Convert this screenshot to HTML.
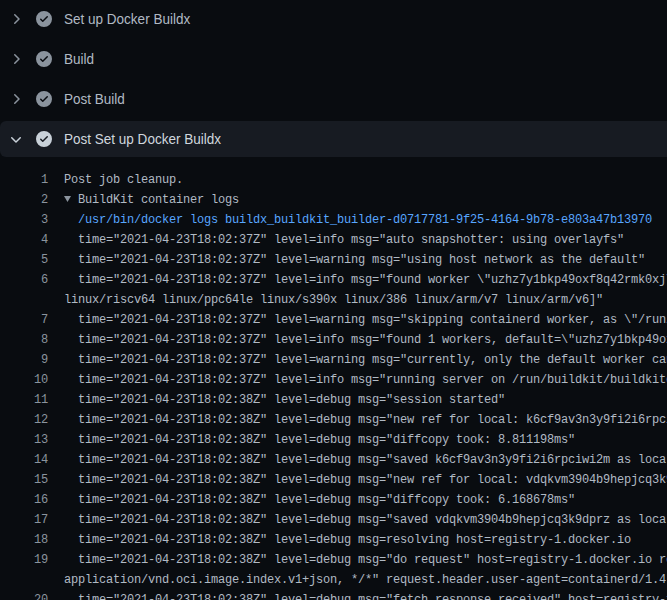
<!DOCTYPE html>
<html><head><meta charset="utf-8">
<style>
html,body{margin:0;padding:0;background:#090c10;width:667px;height:600px;overflow:hidden;}
body{position:relative;font-family:"Liberation Sans",sans-serif;}
.step{position:absolute;left:0;width:667px;height:36px;}
.step.open{background:#171b22;border-radius:6px 0 0 6px;}
.step svg{position:absolute;}
.step .chev{left:8px;top:10px;}
.step .chk{left:36px;top:10px;}
.step .t{position:absolute;left:64px;top:0px;line-height:36px;font-size:14.5px;transform:scaleX(0.932);transform-origin:0 0;color:#b1bac4;white-space:pre;}
.log{position:absolute;left:0;top:169px;width:667px;font-family:"Liberation Mono",monospace;font-size:12px;letter-spacing:-0.2px;color:#b1bac4;}
.ln{position:relative;height:20px;line-height:20px;white-space:pre;}
.ln span{position:absolute;top:1px;}
.tri{position:absolute;left:64px;top:7px;width:7px;height:6px;}
.ln .n{position:absolute;left:0;width:48px;text-align:right;color:#8b949e;}
.ln .c{position:absolute;left:64px;}
.blue{color:#58a6ff;}
</style></head><body>
<div class="step" style="top:1px">
<svg class="chev" width="16" height="16" viewBox="0 0 16 16" fill="#8b949e"><path d="M6.22 3.22a.75.75 0 0 1 1.06 0l4.25 4.25a.75.75 0 0 1 0 1.06l-4.25 4.25a.751.751 0 0 1-1.042-.018.751.751 0 0 1-.018-1.042L9.94 8 6.22 4.28a.75.75 0 0 1 0-1.06Z"/></svg>
<svg class="chk" width="16" height="16" viewBox="0 0 16 16" fill="#8b949e"><path d="M8 16A8 8 0 1 1 8 0a8 8 0 0 1 0 16Zm3.78-9.72a.751.751 0 0 0-.018-1.042.751.751 0 0 0-1.042-.018L6.75 9.19 5.28 7.72a.751.751 0 0 0-1.042.018.751.751 0 0 0-.018 1.042l2 2a.75.75 0 0 0 1.06 0Z"/></svg>
<div class="t">Set up Docker Buildx</div></div>
<div class="step" style="top:41px">
<svg class="chev" width="16" height="16" viewBox="0 0 16 16" fill="#8b949e"><path d="M6.22 3.22a.75.75 0 0 1 1.06 0l4.25 4.25a.75.75 0 0 1 0 1.06l-4.25 4.25a.751.751 0 0 1-1.042-.018.751.751 0 0 1-.018-1.042L9.94 8 6.22 4.28a.75.75 0 0 1 0-1.06Z"/></svg>
<svg class="chk" width="16" height="16" viewBox="0 0 16 16" fill="#8b949e"><path d="M8 16A8 8 0 1 1 8 0a8 8 0 0 1 0 16Zm3.78-9.72a.751.751 0 0 0-.018-1.042.751.751 0 0 0-1.042-.018L6.75 9.19 5.28 7.72a.751.751 0 0 0-1.042.018.751.751 0 0 0-.018 1.042l2 2a.75.75 0 0 0 1.06 0Z"/></svg>
<div class="t">Build</div></div>
<div class="step" style="top:81px">
<svg class="chev" width="16" height="16" viewBox="0 0 16 16" fill="#8b949e"><path d="M6.22 3.22a.75.75 0 0 1 1.06 0l4.25 4.25a.75.75 0 0 1 0 1.06l-4.25 4.25a.751.751 0 0 1-1.042-.018.751.751 0 0 1-.018-1.042L9.94 8 6.22 4.28a.75.75 0 0 1 0-1.06Z"/></svg>
<svg class="chk" width="16" height="16" viewBox="0 0 16 16" fill="#8b949e"><path d="M8 16A8 8 0 1 1 8 0a8 8 0 0 1 0 16Zm3.78-9.72a.751.751 0 0 0-.018-1.042.751.751 0 0 0-1.042-.018L6.75 9.19 5.28 7.72a.751.751 0 0 0-1.042.018.751.751 0 0 0-.018 1.042l2 2a.75.75 0 0 0 1.06 0Z"/></svg>
<div class="t">Post Build</div></div>
<div class="step open" style="top:121px">
<svg class="chev" style="top:11px" width="16" height="16" viewBox="0 0 16 16" fill="#c9d1d9"><path d="M12.78 5.22a.749.749 0 0 1 0 1.06l-4.25 4.25a.749.749 0 0 1-1.06 0L3.22 6.28a.749.749 0 1 1 1.06-1.06L8 8.939l3.72-3.719a.749.749 0 0 1 1.06 0Z"/></svg>
<svg class="chk" width="16" height="16" viewBox="0 0 16 16" fill="#c9d1d9"><path d="M8 16A8 8 0 1 1 8 0a8 8 0 0 1 0 16Zm3.78-9.72a.751.751 0 0 0-.018-1.042.751.751 0 0 0-1.042-.018L6.75 9.19 5.28 7.72a.751.751 0 0 0-1.042.018.751.751 0 0 0-.018 1.042l2 2a.75.75 0 0 0 1.06 0Z"/></svg>
<div class="t" style="color:#d0d7de">Post Set up Docker Buildx</div></div>
<div class="log">
<div class="ln"><span class="n">1</span><span class="c">Post job cleanup.</span></div>
<div class="ln"><span class="n">2</span><svg class="tri" viewBox="0 0 7 6"><path d="M0 0H7L3.5 6Z" fill="#8b949e"/></svg><span class="c" style="left:78px">BuildKit container logs</span></div>
<div class="ln"><span class="n">3</span><span class="c blue">  /usr/bin/docker logs buildx_buildkit_builder-d0717781-9f25-4164-9b78-e803a47b13970</span></div>
<div class="ln"><span class="n">4</span><span class="c">  time="2021-04-23T18:02:37Z" level=info msg="auto snapshotter: using overlayfs"</span></div>
<div class="ln"><span class="n">5</span><span class="c">  time="2021-04-23T18:02:37Z" level=warning msg="using host network as the default"</span></div>
<div class="ln"><span class="n">6</span><span class="c">  time="2021-04-23T18:02:37Z" level=info msg="found worker \"uzhz7y1bkp49oxf8q42rmk0xj\", labels=map</span></div>
<div class="ln"><span class="c">linux/riscv64 linux/ppc64le linux/s390x linux/386 linux/arm/v7 linux/arm/v6]"</span></div>
<div class="ln"><span class="n">7</span><span class="c">  time="2021-04-23T18:02:37Z" level=warning msg="skipping containerd worker, as \"/run/containerd</span></div>
<div class="ln"><span class="n">8</span><span class="c">  time="2021-04-23T18:02:37Z" level=info msg="found 1 workers, default=\"uzhz7y1bkp49oxf8q42rmk0xj\""</span></div>
<div class="ln"><span class="n">9</span><span class="c">  time="2021-04-23T18:02:37Z" level=warning msg="currently, only the default worker can be used."</span></div>
<div class="ln"><span class="n">10</span><span class="c">  time="2021-04-23T18:02:37Z" level=info msg="running server on /run/buildkit/buildkitd.sock"</span></div>
<div class="ln"><span class="n">11</span><span class="c">  time="2021-04-23T18:02:38Z" level=debug msg="session started"</span></div>
<div class="ln"><span class="n">12</span><span class="c">  time="2021-04-23T18:02:38Z" level=debug msg="new ref for local: k6cf9av3n3y9fi2i6rpciwi2m"</span></div>
<div class="ln"><span class="n">13</span><span class="c">  time="2021-04-23T18:02:38Z" level=debug msg="diffcopy took: 8.811198ms"</span></div>
<div class="ln"><span class="n">14</span><span class="c">  time="2021-04-23T18:02:38Z" level=debug msg="saved k6cf9av3n3y9fi2i6rpciwi2m as local:context"</span></div>
<div class="ln"><span class="n">15</span><span class="c">  time="2021-04-23T18:02:38Z" level=debug msg="new ref for local: vdqkvm3904b9hepjcq3k9dprz"</span></div>
<div class="ln"><span class="n">16</span><span class="c">  time="2021-04-23T18:02:38Z" level=debug msg="diffcopy took: 6.168678ms"</span></div>
<div class="ln"><span class="n">17</span><span class="c">  time="2021-04-23T18:02:38Z" level=debug msg="saved vdqkvm3904b9hepjcq3k9dprz as local:dockerfile"</span></div>
<div class="ln"><span class="n">18</span><span class="c">  time="2021-04-23T18:02:38Z" level=debug msg=resolving host=registry-1.docker.io</span></div>
<div class="ln"><span class="n">19</span><span class="c">  time="2021-04-23T18:02:38Z" level=debug msg="do request" host=registry-1.docker.io request.header.accept=</span></div>
<div class="ln"><span class="c">application/vnd.oci.image.index.v1+json, */*" request.header.user-agent=containerd/1.4.0 request.method=HEAD</span></div>
<div class="ln"><span class="n">20</span><span class="c">  time="2021-04-23T18:02:38Z" level=debug msg="fetch response received" host=registry-1.docker.io</span></div>
</div>
</body></html>
